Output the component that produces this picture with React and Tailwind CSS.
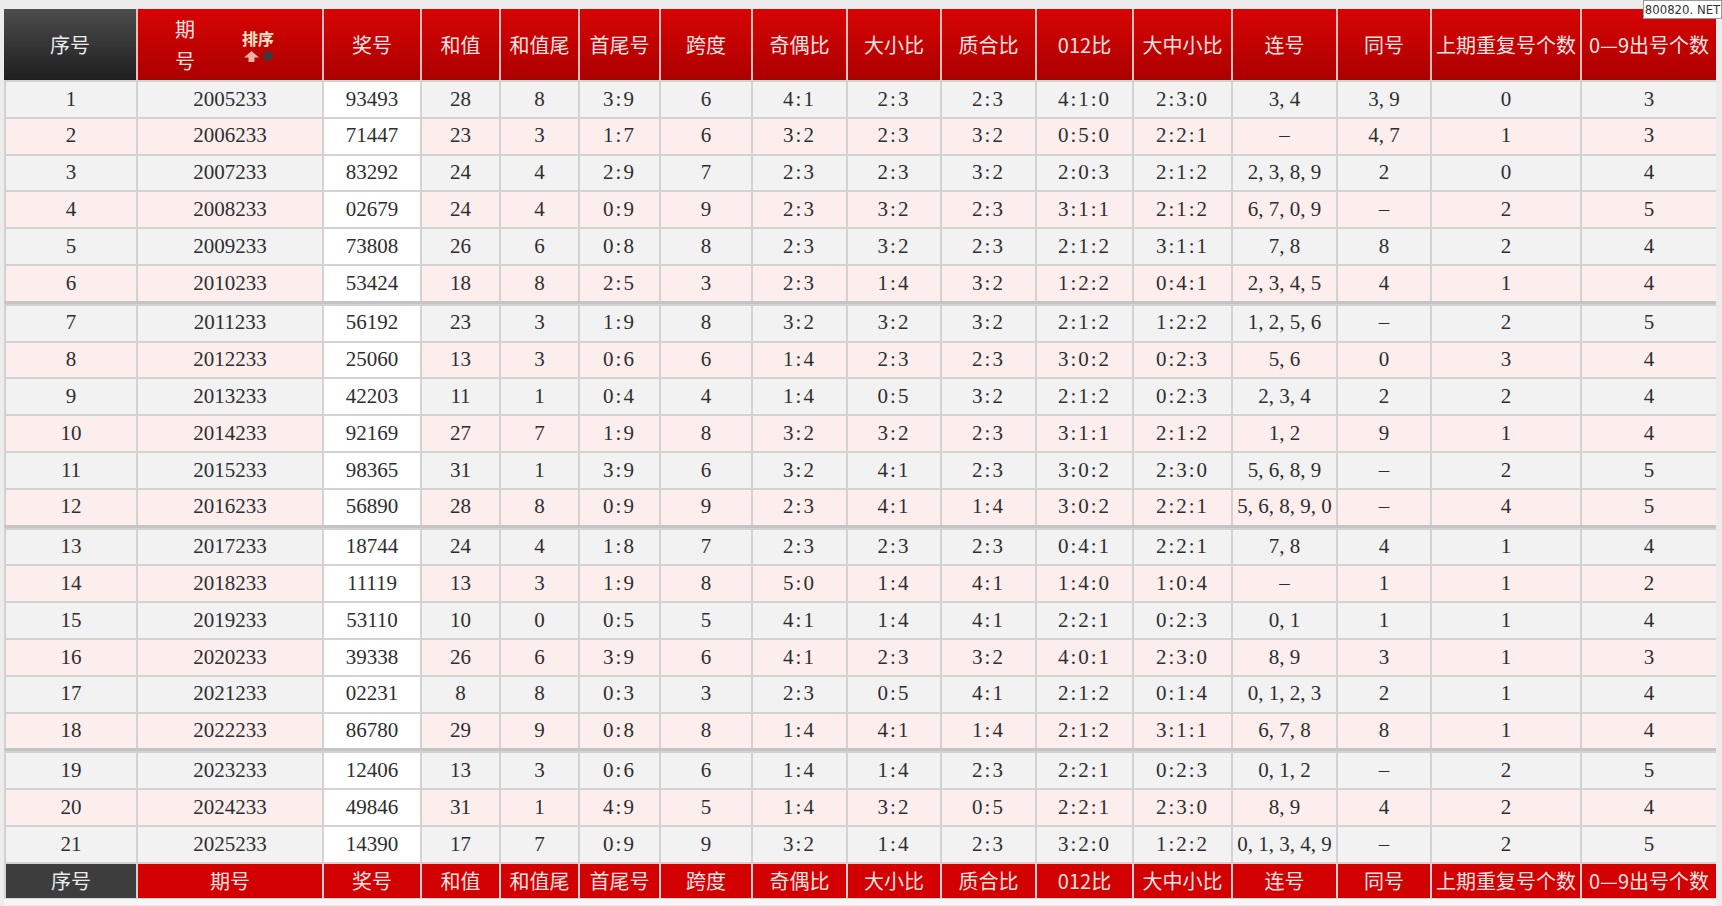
import React from "react";

const cols =
  "grid grid-cols-[130px_184px_96px_77px_77px_79px_90px_93px_92px_93px_95px_97px_103px_92px_148px_134px] gap-x-[2px] pl-[2px]";

const heads = [
  "奖号",
  "和值",
  "和值尾",
  "首尾号",
  "跨度",
  "奇偶比",
  "大小比",
  "质合比",
  "012比",
  "大中小比",
  "连号",
  "同号",
  "上期重复号个数",
  "0—9出号个数",
];

const rows = [
  ["1", "2005233", "93493", "28", "8", "3:9", "6", "4:1", "2:3", "2:3", "4:1:0", "2:3:0", "3, 4", "3, 9", "0", "3"],
  ["2", "2006233", "71447", "23", "3", "1:7", "6", "3:2", "2:3", "3:2", "0:5:0", "2:2:1", "–", "4, 7", "1", "3"],
  ["3", "2007233", "83292", "24", "4", "2:9", "7", "2:3", "2:3", "3:2", "2:0:3", "2:1:2", "2, 3, 8, 9", "2", "0", "4"],
  ["4", "2008233", "02679", "24", "4", "0:9", "9", "2:3", "3:2", "2:3", "3:1:1", "2:1:2", "6, 7, 0, 9", "–", "2", "5"],
  ["5", "2009233", "73808", "26", "6", "0:8", "8", "2:3", "3:2", "2:3", "2:1:2", "3:1:1", "7, 8", "8", "2", "4"],
  ["6", "2010233", "53424", "18", "8", "2:5", "3", "2:3", "1:4", "3:2", "1:2:2", "0:4:1", "2, 3, 4, 5", "4", "1", "4"],
  ["7", "2011233", "56192", "23", "3", "1:9", "8", "3:2", "3:2", "3:2", "2:1:2", "1:2:2", "1, 2, 5, 6", "–", "2", "5"],
  ["8", "2012233", "25060", "13", "3", "0:6", "6", "1:4", "2:3", "2:3", "3:0:2", "0:2:3", "5, 6", "0", "3", "4"],
  ["9", "2013233", "42203", "11", "1", "0:4", "4", "1:4", "0:5", "3:2", "2:1:2", "0:2:3", "2, 3, 4", "2", "2", "4"],
  ["10", "2014233", "92169", "27", "7", "1:9", "8", "3:2", "3:2", "2:3", "3:1:1", "2:1:2", "1, 2", "9", "1", "4"],
  ["11", "2015233", "98365", "31", "1", "3:9", "6", "3:2", "4:1", "2:3", "3:0:2", "2:3:0", "5, 6, 8, 9", "–", "2", "5"],
  ["12", "2016233", "56890", "28", "8", "0:9", "9", "2:3", "4:1", "1:4", "3:0:2", "2:2:1", "5, 6, 8, 9, 0", "–", "4", "5"],
  ["13", "2017233", "18744", "24", "4", "1:8", "7", "2:3", "2:3", "2:3", "0:4:1", "2:2:1", "7, 8", "4", "1", "4"],
  ["14", "2018233", "11119", "13", "3", "1:9", "8", "5:0", "1:4", "4:1", "1:4:0", "1:0:4", "–", "1", "1", "2"],
  ["15", "2019233", "53110", "10", "0", "0:5", "5", "4:1", "1:4", "4:1", "2:2:1", "0:2:3", "0, 1", "1", "1", "4"],
  ["16", "2020233", "39338", "26", "6", "3:9", "6", "4:1", "2:3", "3:2", "4:0:1", "2:3:0", "8, 9", "3", "1", "3"],
  ["17", "2021233", "02231", "8", "8", "0:3", "3", "2:3", "0:5", "4:1", "2:1:2", "0:1:4", "0, 1, 2, 3", "2", "1", "4"],
  ["18", "2022233", "86780", "29", "9", "0:8", "8", "1:4", "4:1", "1:4", "2:1:2", "3:1:1", "6, 7, 8", "8", "1", "4"],
  ["19", "2023233", "12406", "13", "3", "0:6", "6", "1:4", "1:4", "2:3", "2:2:1", "0:2:3", "0, 1, 2", "–", "2", "5"],
  ["20", "2024233", "49846", "31", "1", "4:9", "5", "1:4", "3:2", "0:5", "2:2:1", "2:3:0", "8, 9", "4", "2", "4"],
  ["21", "2025233", "14390", "17", "7", "0:9", "9", "3:2", "1:4", "2:3", "3:2:0", "1:2:2", "0, 1, 3, 4, 9", "–", "2", "5"],
];

const groups = [rows.slice(0, 6), rows.slice(6, 12), rows.slice(12, 18), rows.slice(18)];

const cjk = { fontFamily: '"Noto Sans CJK SC", "Noto Sans", sans-serif' };
const serif = { fontFamily: '"Liberation Serif", "Noto Sans CJK SC", serif' };

function SortIcon() {
  return (
    <div className="flex flex-col items-center ml-[47px] mt-[2px]">
      <span className="text-[16px] font-bold leading-none text-[#ffe4c8]" style={cjk}>
        排序
      </span>
      <div className="flex items-center gap-[4px] mt-[5px]">
        <svg width="15" height="11" viewBox="0 0 15 11">
          <path d="M7.5 0 L15 6.5 L10.5 6.5 L10.5 11 L4.5 11 L4.5 6.5 L0 6.5 Z" fill="#efb2a8" />
        </svg>
        <span className="block w-[10px] h-[10px] rounded-full bg-[#3a3a3a]" />
      </div>
    </div>
  );
}

function Row({ row }) {
  const odd = Number(row[0]) % 2 === 1;
  return (
    <div className={`${cols} pt-[2px] h-[36.8px] bg-[#d2d2d2]`}>
      {row.map((v, i) => (
        <div
          key={i}
          className={`flex items-center justify-center text-[21px] text-[#2e2e2e] whitespace-nowrap ${
            i === 2 ? "bg-white" : odd ? "bg-[#f2f2f2]" : "bg-[#fdeeee]"
          } ${v.includes(":") ? "tracking-[2px]" : ""}`}
          style={serif}
        >
          {v}
        </div>
      ))}
    </div>
  );
}

export default function App() {
  return (
    <div className="relative w-[1722px] h-[906px] bg-[#ececec] pt-[9px] pl-[4px] overflow-hidden">
      <div className="w-[1712px]">
        {/* header */}
        <div className={`${cols} h-[71px] bg-[#f1bdbd]`} style={cjk}>
          <div className="flex items-center justify-center bg-linear-to-b from-[#4d4d4d] to-[#1f1f1f] text-[20px] text-[#ececec] -ml-[2px]">
            序号
          </div>
          <div className="flex items-center pl-[37px] bg-linear-to-b from-[#d80404] to-[#ac0000]">
            <div className="flex flex-col text-[20px] leading-[32px] text-[#fbe3e3]">
              <span>期</span>
              <span>号</span>
            </div>
            <SortIcon />
          </div>
          {heads.map((h) => (
            <div
              key={h}
              className="flex items-center justify-center bg-linear-to-b from-[#d80404] to-[#ac0000] text-[20px] text-[#fbe3e3] whitespace-nowrap"
            >
              {h}
            </div>
          ))}
        </div>

        {/* body */}
        {groups.map((g, gi) => (
          <div key={gi}>
            {gi > 0 && <div className="h-[3px] bg-[#c4c4c4]" />}
            {g.map((r) => (
              <Row key={r[0]} row={r} />
            ))}
          </div>
        ))}

        {/* footer */}
        <div className={`${cols} pt-[2px] h-[36px] bg-[#d2d2d2]`} style={cjk}>
          <div className="flex items-center justify-center bg-[#3d3d3d] text-[20px] text-[#ececec]">
            序号
          </div>
          {["期号", ...heads].map((h) => (
            <div
              key={h}
              className="flex items-center justify-center bg-[#d20000] text-[20px] text-[#fbe3e3] whitespace-nowrap"
            >
              {h}
            </div>
          ))}
        </div>
        <div className="h-[7px] bg-[#f6f6f6] border-t border-[#d6d6d6]" />
      </div>

      {/* watermark */}
      <div
        className="absolute top-0 right-0 w-[79px] h-[19px] bg-white border border-[#9a9a9a] flex items-center justify-center text-[13px] text-[#333]"
        style={{ fontFamily: '"Liberation Sans Narrow", "DejaVu Sans Condensed", sans-serif' }}
      >
        800820. NET
      </div>
    </div>
  );
}
